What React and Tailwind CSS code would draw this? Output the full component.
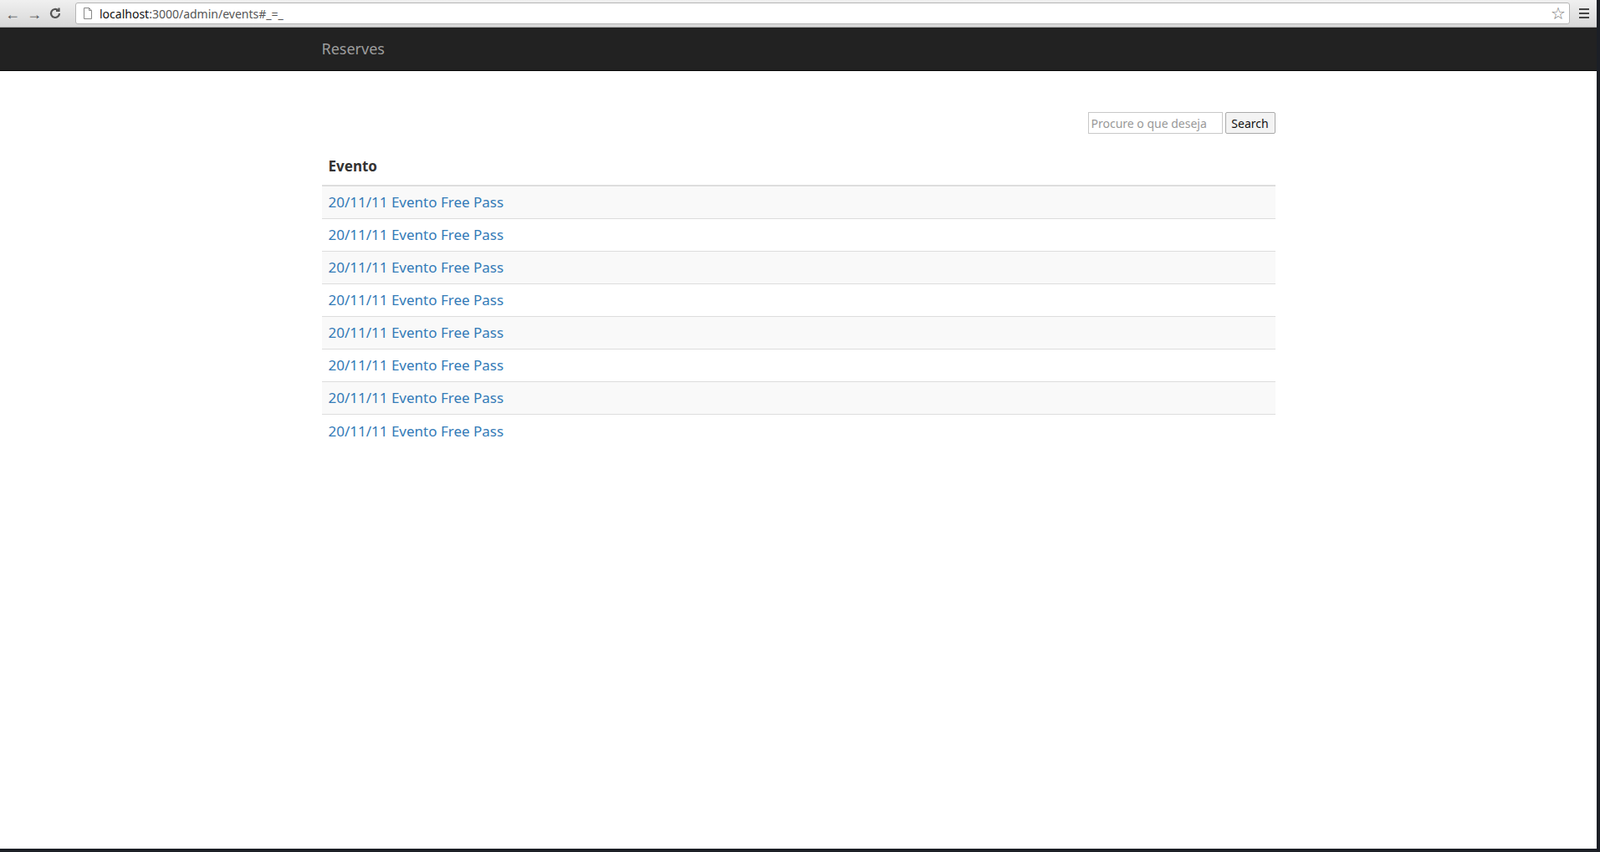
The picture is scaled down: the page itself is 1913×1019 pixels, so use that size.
import React from 'react';

const rows = Array.from({ length: 8 }, () => '20/11/11 Evento Free Pass');

export default function App() {
  return (
    <div className="h-[1019px] w-[1913px] overflow-hidden bg-[#1c1f26] font-['Liberation_Sans',Arial,sans-serif]">
      <div className="mr-[4px] h-[1015px] bg-white flex flex-col">
        {/* browser chrome */}
        <div className="h-[33px] flex items-center bg-gradient-to-b from-[#f0f0f0] to-[#d8d8d8] border-b border-[#a8a8a8] px-[4px] gap-[6px]">
          <div className="flex items-center gap-[8px] text-[#555] text-[18px] w-[80px] pl-[2px]">
            <span>←</span><span>→</span>
            <svg width="16" height="16" viewBox="0 0 16 16" fill="none" stroke="#555" strokeWidth="2.2">
              <path d="M13 8a5 5 0 1 1-1.6-3.7" />
              <path d="M12.5 1.5v3.5H9" />
            </svg>
          </div>
          <div className="flex-1 h-[26px] bg-white border border-[#b5b5b5] rounded-[3px] flex items-center pl-[8px] pr-[4px]">
            <svg width="12" height="14" viewBox="0 0 12 14" fill="none" stroke="#888" strokeWidth="1">
              <path d="M1.5 0.5h6l3 3v10h-9z M7.5 0.5v3h3" />
            </svg>
            <span className="ml-[8px] text-[14px] text-[#111]">localhost<span className="text-[#555]">:3000/admin/events#_=_</span></span>
            <span className="ml-auto text-[#777] text-[20px] leading-none">☆</span>
          </div>
          <div className="w-[22px] flex flex-col gap-[3px] items-center">
            <div className="w-[12px] h-[2px] bg-[#444]" />
            <div className="w-[12px] h-[2px] bg-[#444]" />
            <div className="w-[12px] h-[2px] bg-[#444]" />
          </div>
        </div>

        {/* navbar */}
        <div className="h-[52px] bg-[#222] border-b border-[#080808]">
          <div className="w-[1140px] mx-auto h-full flex items-center">
            <span className="text-[#9d9d9d] text-[18px]">Reserves</span>
          </div>
        </div>

        {/* content */}
        <div className="w-[1140px] mx-auto pt-[49px]">
          <div className="flex justify-end gap-[3px]">
            <input
              placeholder="Procure o que deseja"
              className="w-[161px] h-[26px] border border-[#c8c8c8] px-[3px] text-[14px] placeholder:text-[#999] outline-none"
            />
            <button className="w-[60px] h-[26px] border border-[#aaa] bg-[#f3f3f3] text-[14px] text-[#111] rounded-[2px]">Search</button>
          </div>
          <div className="mt-[17px]">
            <div className="h-[46px] flex items-center px-[8px] border-b-2 border-[#ddd] text-[17px] font-bold text-[#333]">Evento</div>
            {rows.map((r, i) => (
              <div
                key={i}
                className={`h-[39px] flex items-center px-[8px] text-[17px] text-[#337ab7] ${i % 2 === 0 ? 'bg-[#f9f9f9]' : 'bg-white'} ${i < rows.length - 1 ? 'border-b border-[#ddd]' : ''}`}
              >
                {r}
              </div>
            ))}
          </div>
        </div>
      </div>
    </div>
  );
}
